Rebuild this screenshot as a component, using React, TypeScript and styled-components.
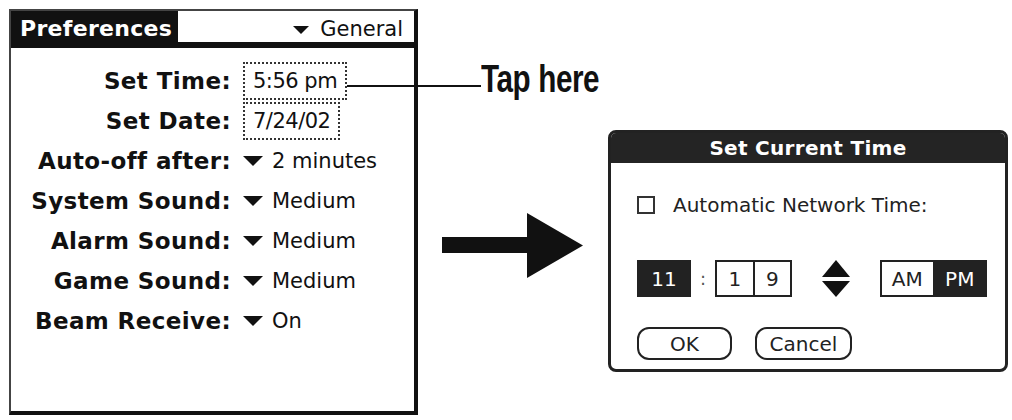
import styled, { createGlobalStyle } from 'styled-components'

const GlobalStyle = createGlobalStyle`
  html, body {
    margin: 0;
    padding: 0;
    background: #fff;
  }
  body {
    width: 1012px;
    height: 420px;
    overflow: hidden;
    font-family: "DejaVu Sans", "Liberation Sans", sans-serif;
    color: #111;
  }
`

const Page = styled.div`
  position: relative;
  display: flex;
  align-items: flex-start;
  width: 1012px;
  height: 420px;
  padding: 9px 0 0 9px;
  box-sizing: border-box;
`

// left: the Palm "Preferences" screen
const Screen = styled.section`
  display: flex;
  flex-direction: column;
  width: 409px;
  height: 406px;
  box-sizing: border-box;
  border: 2px solid #444;
  border-right: 4px solid #111;
  border-bottom: 4px solid #111;
`

const Header = styled.header`
  display: flex;
  height: 37px;
`

const Tab = styled.div`
  display: flex;
  align-items: flex-end;
  width: 167px;
  box-sizing: border-box;
  padding: 0 0 8px 9px;
  background: #111;
  color: #fff;
  font-weight: bold;
  font-size: 22px;
  line-height: 22px;
  letter-spacing: 0.3px;
`

const HeaderMenu = styled.div`
  flex: 1;
  display: flex;
  justify-content: flex-end;
  align-items: flex-end;
  padding: 0 11px 2px 0;
  border-bottom: 6px solid #111;
  font-size: 21px;
  line-height: 21px;
`

const PopupArrow = styled.span<{ $w?: number; $h?: number; $gap?: number }>`
  display: inline-block;
  align-self: center;
  width: 0;
  height: 0;
  border-left: ${p => (p.$w ?? 20) / 2}px solid transparent;
  border-right: ${p => (p.$w ?? 20) / 2}px solid transparent;
  border-top: ${p => p.$h ?? 10}px solid #111;
  margin-right: ${p => p.$gap ?? 9}px;
`

const MenuTrigger = styled.span`
  display: flex;
  align-items: center;
`

const Fields = styled.div`
  display: grid;
  grid-template-columns: 220px 1fr;
  grid-auto-rows: 40px;
  column-gap: 12px;
  padding-top: 13px;
`

const Label = styled.div`
  text-align: right;
  font-weight: bold;
  font-size: 23px;
  line-height: 40px;
  letter-spacing: 0.4px;
  white-space: nowrap;
`

const Value = styled.div`
  display: flex;
  align-items: center;
  font-size: 21px;
  white-space: nowrap;
`

const DottedField = styled.span`
  display: flex;
  align-items: center;
  height: 38px;
  box-sizing: border-box;
  padding: 0 8px;
  border: 2px dotted #333;
  letter-spacing: -0.5px;
`

// middle: annotation and arrow
const Annotation = styled.div`
  position: absolute;
  left: 347px;
  top: 60px;
  display: flex;
  align-items: flex-start;
`

const Leader = styled.span`
  width: 134px;
  height: 2px;
  margin-top: 25px;
  background: #111;
`

const Callout = styled.span`
  display: inline-block;
  font-family: "Liberation Sans Narrow", "Liberation Sans", sans-serif;
  font-weight: bold;
  font-size: 38px;
  line-height: 38px;
  letter-spacing: -0.5px;
  color: #111;
  transform: scaleX(0.78);
  transform-origin: left center;
`

const ArrowWrap = styled.div`
  margin: 204px 25px 0 24px;
  line-height: 0;
`

// right: the "Set Current Time" dialog
const Dialog = styled.section`
  display: flex;
  flex-direction: column;
  width: 400px;
  height: 242px;
  box-sizing: border-box;
  margin-top: 121px;
  border: 3px solid #222;
  border-radius: 8px;
  overflow: hidden;
  color: #222;
`

const TitleBar = styled.div`
  height: 30px;
  background: #242424;
  color: #fff;
  text-align: center;
  font-weight: bold;
  font-size: 20px;
  line-height: 30px;
  letter-spacing: 0.3px;
`

const DialogBody = styled.div`
  display: flex;
  flex-direction: column;
  padding: 32px 0 0 26px;
`

const CheckRow = styled.label`
  display: flex;
  align-items: center;
  gap: 18px;
  font-size: 20px;
  line-height: 20px;
`

const CheckBox = styled.span`
  width: 18px;
  height: 18px;
  box-sizing: border-box;
  border: 2px solid #333;
`

const TimeRow = styled.div`
  display: flex;
  align-items: center;
  height: 37px;
  margin-top: 45px;
  font-size: 20px;
`

const Segment = styled.div<{ $width: number; $bare?: boolean }>`
  display: flex;
  width: ${p => p.$width}px;
  height: 37px;
  box-sizing: border-box;
  border: ${p => (p.$bare ? 'none' : '2px solid #222')};
`

const Cell = styled.span<{ $active?: boolean }>`
  flex: 1;
  display: flex;
  align-items: center;
  justify-content: center;
  background: ${p => (p.$active ? '#222' : '#fff')};
  color: ${p => (p.$active ? '#fff' : '#222')};
  & + & {
    border-left: 2px solid #222;
  }
`

const Colon = styled.span`
  width: 24px;
  text-align: center;
  font-size: 18px;
  color: #555;
`

const Spinner = styled.span`
  margin: 0 30px;
  line-height: 0;
`

const ButtonRow = styled.div`
  display: flex;
  gap: 23px;
  margin-top: 30px;
`

const Button = styled.button<{ $width: number }>`
  width: ${p => p.$width}px;
  height: 33px;
  padding: 0;
  border: 2px solid #222;
  border-radius: 12px;
  background: #fff;
  color: #222;
  font-family: "DejaVu Sans", sans-serif;
  font-size: 20px;
`

const fields = [
  { label: 'Set Time:', value: '5:56 pm', dotted: true },
  { label: 'Set Date:', value: '7/24/02', dotted: true },
  { label: 'Auto-off after:', value: '2 minutes' },
  { label: 'System Sound:', value: 'Medium' },
  { label: 'Alarm Sound:', value: 'Medium' },
  { label: 'Game Sound:', value: 'Medium' },
  { label: 'Beam Receive:', value: 'On' },
]

const App = () => {
  return (
    <Page>
      <GlobalStyle />
      <Screen>
        <Header>
          <Tab>Preferences</Tab>
          <HeaderMenu>
            <MenuTrigger>
              <PopupArrow $w={17} $h={8} $gap={11} />
              General
            </MenuTrigger>
          </HeaderMenu>
        </Header>
        <Fields>
          {fields.flatMap(f => [
            <Label key={f.label}>{f.label}</Label>,
            <Value key={f.label + '-v'}>
              {f.dotted ? (
                <DottedField>{f.value}</DottedField>
              ) : (
                <MenuTrigger>
                  <PopupArrow />
                  {f.value}
                </MenuTrigger>
              )}
            </Value>,
          ])}
        </Fields>
      </Screen>

      <Annotation>
        <Leader />
        <Callout>Tap here</Callout>
      </Annotation>

      <ArrowWrap>
        <svg width="141" height="65" viewBox="0 0 141 65">
          <polygon points="0,24 85,24 85,0 141,32.5 85,65 85,40 0,40" fill="#111" />
        </svg>
      </ArrowWrap>

      <Dialog>
        <TitleBar>Set Current Time</TitleBar>
        <DialogBody>
          <CheckRow>
            <CheckBox />
            Automatic Network Time:
          </CheckRow>
          <TimeRow>
            <Segment $width={54} $bare>
              <Cell $active>11</Cell>
            </Segment>
            <Colon>:</Colon>
            <Segment $width={77}>
              <Cell>1</Cell>
              <Cell>9</Cell>
            </Segment>
            <Spinner>
              <svg width="28" height="37" viewBox="0 0 28 37">
                <polygon points="0,17 14,0 28,17" fill="#111" />
                <polygon points="0,21 28,21 14,37" fill="#111" />
              </svg>
            </Spinner>
            <Segment $width={107}>
              <Cell>AM</Cell>
              <Cell $active>PM</Cell>
            </Segment>
          </TimeRow>
          <ButtonRow>
            <Button $width={95}>OK</Button>
            <Button $width={97}>Cancel</Button>
          </ButtonRow>
        </DialogBody>
      </Dialog>
    </Page>
  )
}

export default App
